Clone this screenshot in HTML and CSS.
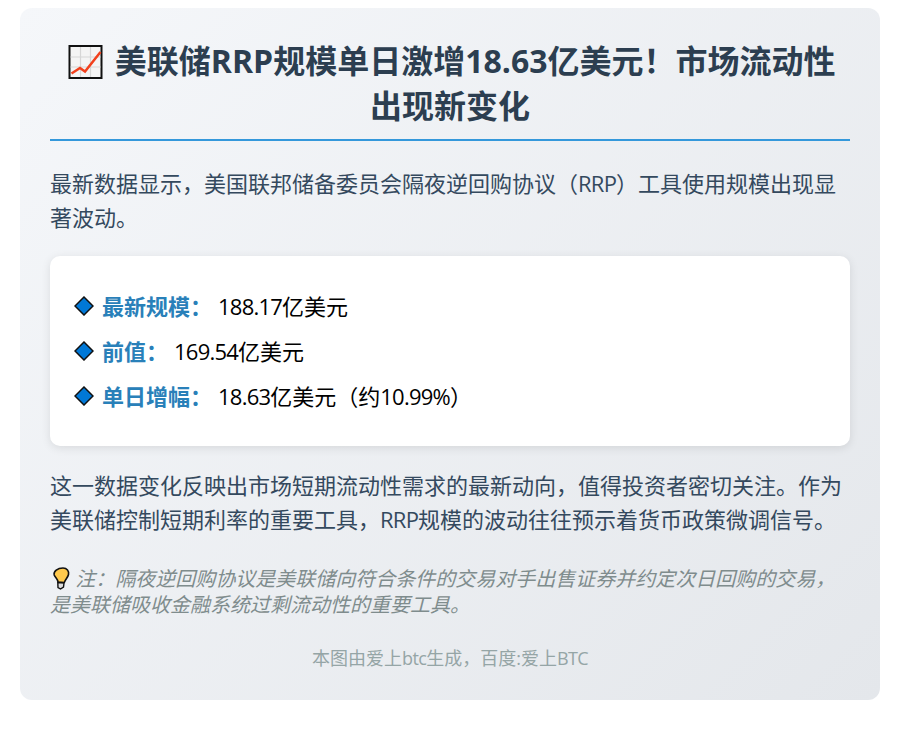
FILE: index.html
```html
<!DOCTYPE html>
<html lang="zh-CN">
<head>
<meta charset="utf-8">
<title>美联储RRP规模</title>
<link rel="stylesheet" href="styles.css">
</head>
<body>
<main class="card">
  <h1 class="title"><svg class="chart" viewBox="0 0 34 34"><rect x="1" y="1" width="32" height="32" fill="#f4f4f4" stroke="#111" stroke-width="2"/><path d="M2 12H32M2 22H32M12 2V32M22 2V32" stroke="#d6d6d6" stroke-width="1.2" fill="none"/><path d="M3 28.500L11.500 23L16.500 26.500L32 7" stroke="#f2401c" stroke-width="2.500" fill="none"/></svg> 美联储RRP规模单日激增18.63亿美元！市场流动性出现新变化</h1>
  <p class="text">最新数据显示，美国联邦储备委员会隔夜逆回购协议（<span class="latin">RRP</span>）工具使用规模出现显著波动。</p>
  <ul class="box">
    <li class="row"><svg class="diamond" viewBox="0 0 20 20"><path d="M10 1L19 10L10 19L1 10Z" fill="#0078d7" stroke="#111" stroke-width="1.5"/></svg><strong class="label">最新规模：</strong><span><span class="latin">188.17</span>亿美元</span></li>
    <li class="row"><svg class="diamond" viewBox="0 0 20 20"><path d="M10 1L19 10L10 19L1 10Z" fill="#0078d7" stroke="#111" stroke-width="1.5"/></svg><strong class="label">前值：</strong><span><span class="latin">169.54</span>亿美元</span></li>
    <li class="row"><svg class="diamond" viewBox="0 0 20 20"><path d="M10 1L19 10L10 19L1 10Z" fill="#0078d7" stroke="#111" stroke-width="1.5"/></svg><strong class="label">单日增幅：</strong><span><span class="latin">18.63</span>亿美元（约<span class="latin">10.99%</span>）</span></li>
  </ul>
  <p class="text">这一数据变化反映出市场短期流动性需求的最新动向，值得投资者密切关注。作为美联储控制短期利率的重要工具，<span class="latin">RRP</span>规模的波动往往预示着货币政策微调信号。</p>
  <p class="note"><svg class="bulb" viewBox="0 0 18 23"><path d="M11 1C15 1 17.200 4 16.500 7.500C15.900 10.500 13.500 12 12.300 15.500L6 15C6 12 3 10.500 2.200 8C1.300 4.500 5.500 1 11 1Z" fill="#ffc94d" stroke="#111" stroke-width="1.600"/><path d="M5.800 15.500L12 16L11.500 20L8.500 22L6 20.500Z" fill="#ddd" stroke="#111" stroke-width="1.400"/></svg> 注：隔夜逆回购协议是美联储向符合条件的交易对手出售证券并约定次日回购的交易，是美联储吸收金融系统过剩流动性的重要工具。</p>
  <footer class="foot">本图由爱上<span class="latin">btc</span>生成，百度:爱上<span class="latin">BTC</span></footer>
</main>
</body>
</html>
```
FILE: styles.css
```css
* { box-sizing: border-box; }
html, body { background: #fff; }
body {
  margin: 0;
  padding: 8px 20px 0;
  font-family: "Open Sans", "Noto Sans CJK SC", sans-serif;
}
.card {
  height: 692px;
  padding: 30px;
  border-radius: 12px;
  background: linear-gradient(135deg, #f5f7fa 0%, #e4e7eb 100%);
}
.latin { letter-spacing: -0.035em; }
.title {
  margin: 0 0 25px;
  padding-bottom: 11px;
  border-bottom: 2px solid #3498db;
  font-size: 32px;
  line-height: 45px;
  font-weight: 700;
  text-align: center;
  color: #2c3e50;
}
.chart { width: 35px; height: 34px; vertical-align: -6px; margin: 0 4px 0 3px; }
.text {
  margin: 0 0 22px;
  font-size: 22px;
  line-height: 34px;
  color: #34495e;
}
.box {
  margin: 0 0 22px;
  padding: 26px 24px 29px;
  list-style: none;
  background: #fff;
  border-radius: 10px;
  box-shadow: 0 2px 10px rgba(0, 0, 0, 0.1);
}
.row {
  display: flex;
  align-items: center;
  height: 45px;
  font-size: 22px;
  color: #000;
}
.diamond { width: 20px; height: 20px; margin: 3px 8px 0 0; flex: none; }
.label { color: #2980b9; margin-right: 6px; }
.note {
  margin: 30px 0 0;
  font-size: 20px;
  line-height: 26px;
  font-style: italic;
  color: #7f8c8d;
}
.bulb { width: 18px; height: 23px; vertical-align: -4px; margin-left: 2px; }
.foot {
  margin-top: 27px;
  font-size: 18px;
  line-height: 26px;
  text-align: center;
  color: #95a5a6;
}
```
